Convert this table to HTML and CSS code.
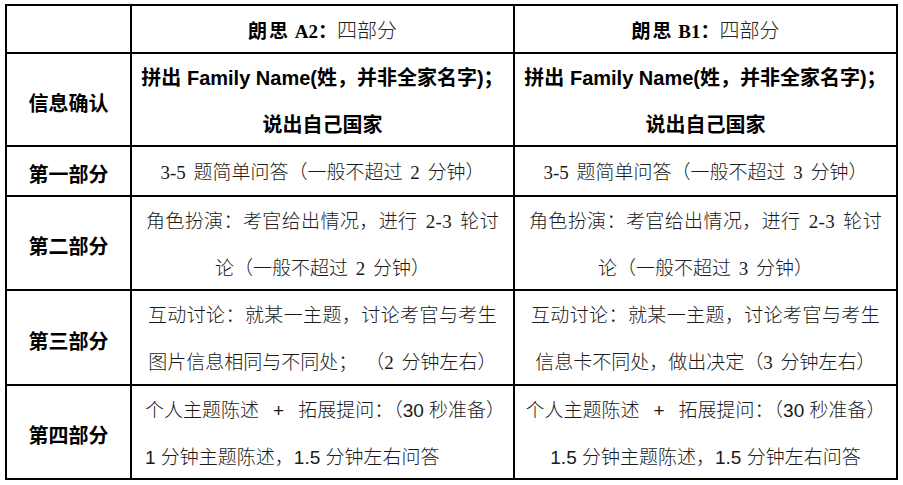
FILE: index.html
```html
<!DOCTYPE html>
<html lang="zh-CN">
<head>
<meta charset="utf-8">
<title>朗思 A2 / B1 四部分</title>
<link rel="stylesheet" href="styles.css">
</head>
<body>
<div class="table">
  <div class="cell"></div>
  <div class="cell head"><div><span class="hb">朗思</span> <span class="hs">A2：</span><span class="hr">四部分</span></div></div>
  <div class="cell head"><div><span class="hb">朗思</span> <span class="hs">B1：</span><span class="hr">四部分</span></div></div>

  <div class="cell label">信息确认</div>
  <div class="cell strong"><div>拼出 Family Name(姓，并非全家名字)；<br>说出自己国家</div></div>
  <div class="cell strong"><div>拼出 Family Name(姓，并非全家名字)；<br>说出自己国家</div></div>

  <div class="cell label">第一部分</div>
  <div class="cell body"><div>3-5 题简单问答（一般不超过 2 分钟）</div></div>
  <div class="cell body"><div>3-5 题简单问答（一般不超过 3 分钟）</div></div>

  <div class="cell label">第二部分</div>
  <div class="cell body"><div><span class="full">角色扮演：考官给出情况，进行 2-3 轮讨</span><br>论（一般不超过 2 分钟）</div></div>
  <div class="cell body"><div><span class="full">角色扮演：考官给出情况，进行 2-3 轮讨</span><br>论（一般不超过 3 分钟）</div></div>

  <div class="cell label">第三部分</div>
  <div class="cell body"><div><span class="full">互动讨论：就某一主题，讨论考官与考生</span><br>图片信息相同与不同处；<span class="gap"></span>（2 分钟左右）</div></div>
  <div class="cell body"><div><span class="full">互动讨论：就某一主题，讨论考官与考生</span><br>信息卡不同处，做出决定（3 分钟左右）</div></div>

  <div class="cell label">第四部分</div>
  <div class="cell body sans left"><div>个人主题陈述<span class="plus">+</span>拓展提问：（30 秒准备）<br>1 分钟主题陈述，1.5 分钟左右问答</div></div>
  <div class="cell body sans"><div>个人主题陈述<span class="plus">+</span>拓展提问：（30 秒准备）<br>1.5 分钟主题陈述，1.5 分钟左右问答</div></div>
</div>
</body>
</html>
```

FILE: styles.css
```css
html, body {
  margin: 0;
  padding: 0;
  background: #fff;
}

body {
  width: 903px;
  height: 485px;
  overflow: hidden;
}

.table {
  display: grid;
  grid-template-columns: 123px 381px 381px;
  grid-template-rows: 46px 91px 48px 92px 93px 92px;
  gap: 2px;
  padding: 2px;
  background: #000;
  width: max-content;
  margin: 4px 0 0 5px;
}

.cell {
  background: #fff;
  display: flex;
  align-items: center;
  justify-content: center;
  text-align: center;
  box-sizing: border-box;
  padding-top: 3px;
  color: #000;
  line-height: 47px;
  white-space: nowrap;
}

.head {
  font-family: "Liberation Serif", "Noto Sans CJK SC", serif;
  font-size: 19px;
  padding-top: 3px;
}

.hb {
  font-family: "Noto Sans CJK SC", sans-serif;
  font-weight: 700;
  letter-spacing: 2px;
}

.hs {
  font-family: "Liberation Serif", "Noto Sans CJK SC", serif;
  font-weight: 700;
}

.hr {
  font-family: "Noto Sans CJK SC", sans-serif;
  font-weight: 300;
  font-size: 20px;
  color: #222;
}

.label {
  font-family: "Noto Sans CJK SC", sans-serif;
  font-weight: 700;
  font-size: 20px;
  padding-top: 5px;
}

.strong {
  font-family: "Liberation Sans", "Noto Sans CJK SC", sans-serif;
  font-weight: 700;
  font-size: 20px;
  padding-top: 5px;
}

.body {
  font-family: "Liberation Serif", "Noto Sans CJK SC", serif;
  font-weight: 300;
  font-size: 19px;
  color: #1a1a1a;
  word-spacing: 3px;
}

.full {
  letter-spacing: 0.4px;
}

.gap {
  display: inline-block;
  width: 8px;
}

.sans {
  font-family: "Liberation Sans", "Noto Sans CJK SC", sans-serif;
  word-spacing: 0;
}

.left {
  justify-content: flex-start;
  text-align: left;
  padding-left: 13px;
}

.plus {
  margin: 0 14px;
}
```
